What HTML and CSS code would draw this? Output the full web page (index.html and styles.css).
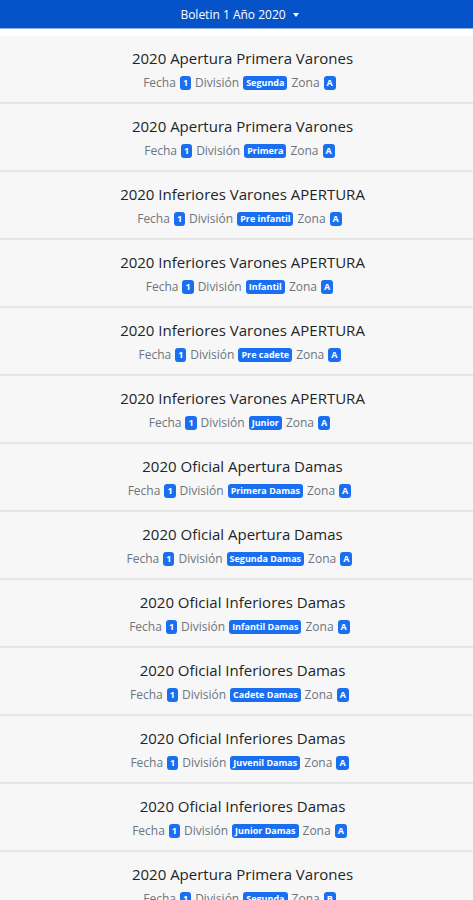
FILE: index.html
```html
<!DOCTYPE html>
<html lang="es">
<head>
<meta charset="utf-8">
<title>Boletin</title>
<link rel="stylesheet" href="styles.css">
</head>
<body>
<header class="topbar">
  <span class="topbar-title">Boletin 1 Año 2020</span>
  <span class="caret"></span>
</header>
<ul class="list">
  <li class="item"><div class="title">2020 Apertura Primera Varones</div><div class="meta">Fecha <span class="badge">1</span> División <span class="badge">Segunda</span> Zona <span class="badge">A</span></div></li>
  <li class="item"><div class="title">2020 Apertura Primera Varones</div><div class="meta">Fecha <span class="badge">1</span> División <span class="badge">Primera</span> Zona <span class="badge">A</span></div></li>
  <li class="item"><div class="title">2020 Inferiores Varones APERTURA</div><div class="meta">Fecha <span class="badge">1</span> División <span class="badge">Pre infantil</span> Zona <span class="badge">A</span></div></li>
  <li class="item"><div class="title">2020 Inferiores Varones APERTURA</div><div class="meta">Fecha <span class="badge">1</span> División <span class="badge">Infantil</span> Zona <span class="badge">A</span></div></li>
  <li class="item"><div class="title">2020 Inferiores Varones APERTURA</div><div class="meta">Fecha <span class="badge">1</span> División <span class="badge">Pre cadete</span> Zona <span class="badge">A</span></div></li>
  <li class="item"><div class="title">2020 Inferiores Varones APERTURA</div><div class="meta">Fecha <span class="badge">1</span> División <span class="badge">Junior</span> Zona <span class="badge">A</span></div></li>
  <li class="item"><div class="title">2020 Oficial Apertura Damas</div><div class="meta">Fecha <span class="badge">1</span> División <span class="badge">Primera Damas</span> Zona <span class="badge">A</span></div></li>
  <li class="item"><div class="title">2020 Oficial Apertura Damas</div><div class="meta">Fecha <span class="badge">1</span> División <span class="badge">Segunda Damas</span> Zona <span class="badge">A</span></div></li>
  <li class="item"><div class="title">2020 Oficial Inferiores Damas</div><div class="meta">Fecha <span class="badge">1</span> División <span class="badge">Infantil Damas</span> Zona <span class="badge">A</span></div></li>
  <li class="item"><div class="title">2020 Oficial Inferiores Damas</div><div class="meta">Fecha <span class="badge">1</span> División <span class="badge">Cadete Damas</span> Zona <span class="badge">A</span></div></li>
  <li class="item"><div class="title">2020 Oficial Inferiores Damas</div><div class="meta">Fecha <span class="badge">1</span> División <span class="badge">Juvenil Damas</span> Zona <span class="badge">A</span></div></li>
  <li class="item"><div class="title">2020 Oficial Inferiores Damas</div><div class="meta">Fecha <span class="badge">1</span> División <span class="badge">Junior Damas</span> Zona <span class="badge">A</span></div></li>
  <li class="item"><div class="title">2020 Apertura Primera Varones</div><div class="meta">Fecha <span class="badge">1</span> División <span class="badge">Segunda</span> Zona <span class="badge">B</span></div></li>
</ul>
</body>
</html>
```

FILE: styles.css
```css
* { box-sizing: border-box; }
html, body { margin: 0; padding: 0; background: #ffffff; }
body { font-family: "Open Sans", "Noto Sans", sans-serif; overflow: hidden; }

.topbar {
  height: 29px;
  background: #0653c9;
  border-bottom: 1px solid #8fb4ea;
  display: flex;
  align-items: center;
  justify-content: center;
  gap: 7px;
  color: #ffffff;
  font-size: 12px;
  padding-left: 6px;
}
.caret {
  width: 0; height: 0;
  border-left: 3px solid transparent;
  border-right: 3px solid transparent;
  border-top: 4px solid #ffffff;
  margin-top: 1px;
}

.list {
  list-style: none;
  margin: 7px 0 0 0;
  padding: 0;
}
.item {
  height: 68px;
  background: #f7f7f7;
  border-bottom: 2px solid #e6e6e6;
  display: flex;
  flex-direction: column;
  align-items: center;
  padding-top: 11px;
}
.title {
  font-size: 15px;
  color: #212529;
  line-height: 22px;
  padding-left: 12px;
}
.meta {
  margin-top: 5px;
  font-size: 12px;
  color: #6c757d;
  line-height: 17px;
  display: flex;
  align-items: center;
  gap: 4px;
  padding-left: 6px;
}
.badge {
  background: #1a6ff0;
  color: #ffffff;
  font-size: 9px;
  font-weight: 700;
  border-radius: 3px;
  padding: 1px 3px;
  line-height: 12px;
}
```
